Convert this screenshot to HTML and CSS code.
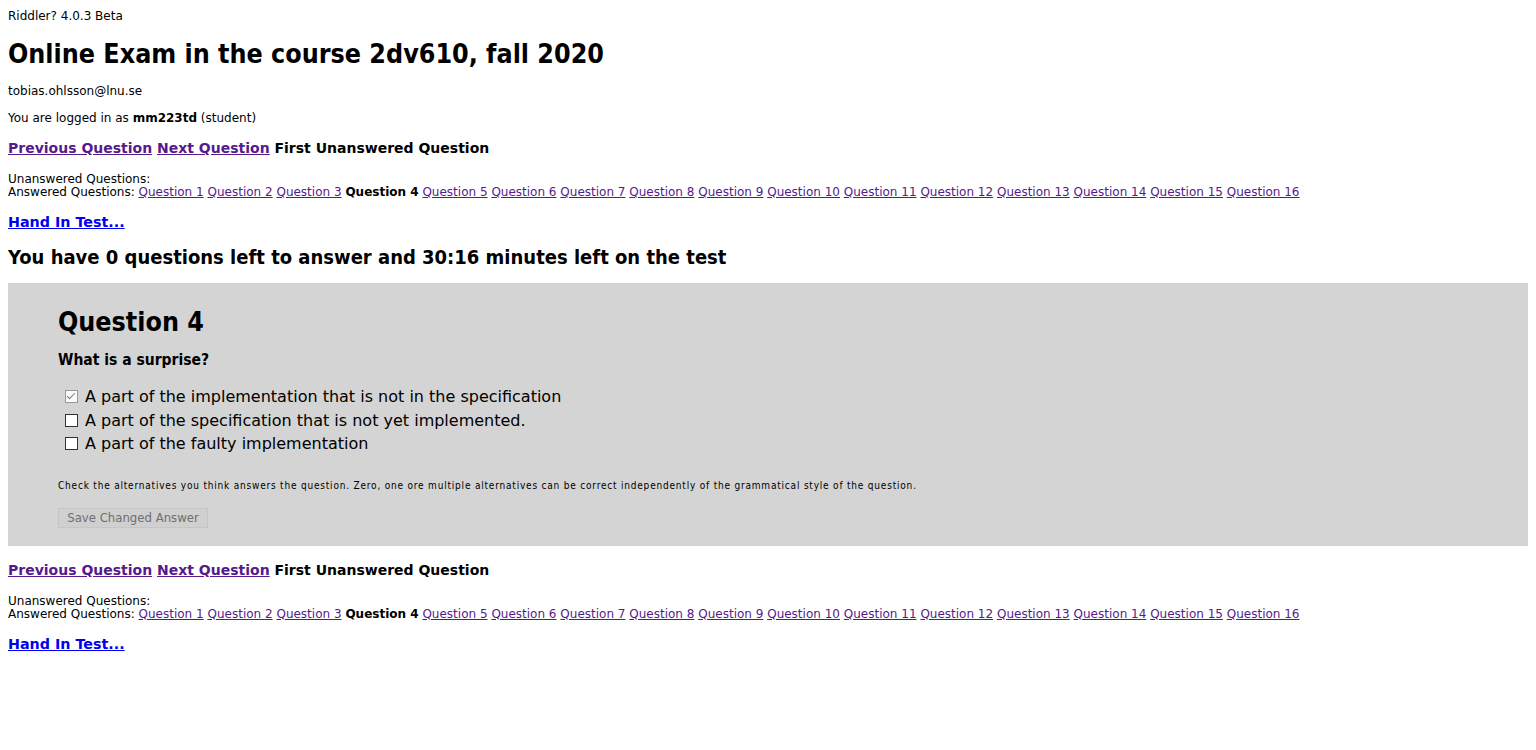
FILE: index.html
```html
<!DOCTYPE html>
<html lang="en">
<head>
<meta charset="utf-8">
<title>Riddler - Online Exam</title>
<link rel="stylesheet" href="styles.css">
</head>
<body>
<p class="version">Riddler? 4.0.3 Beta</p>
<h1 class="title">Online Exam in the course 2dv610, fall 2020</h1>
<p class="small email">tobias.ohlsson@lnu.se</p>
<p class="small logged">You are logged in as <b class="user">mm223td</b> (student)</p>

<div class="nav"><a href="#" class="visited">Previous Question</a> <a href="#" class="visited">Next Question</a> <span>First Unanswered Question</span></div>
<div class="qlist">
  <div>Unanswered Questions:</div>
  <div>Answered Questions: <a href="#">Question 1</a> <a href="#">Question 2</a> <a href="#">Question 3</a> <b>Question 4</b> <a href="#">Question 5</a> <a href="#">Question 6</a> <a href="#">Question 7</a> <a href="#">Question 8</a> <a href="#">Question 9</a> <a href="#">Question 10</a> <a href="#">Question 11</a> <a href="#">Question 12</a> <a href="#">Question 13</a> <a href="#">Question 14</a> <a href="#">Question 15</a> <a href="#">Question 16</a></div>
</div>
<div class="handin"><a href="#">Hand In Test...</a></div>

<h2 class="status">You have 0 questions left to answer and 30:16 minutes left on the test</h2>

<div class="question">
  <h2 class="qtitle">Question 4</h2>
  <p class="qtext">What is a surprise?</p>
  <div class="options">
    <label class="option"><input type="checkbox" checked disabled class="cb"> A part of the implementation that is not in the specification</label>
    <label class="option"><input type="checkbox" class="cb"> A part of the specification that is not yet implemented.</label>
    <label class="option"><input type="checkbox" class="cb"> A part of the faulty implementation</label>
  </div>
  <p class="hint">Check the alternatives you think answers the question. Zero, one ore multiple alternatives can be correct independently of the grammatical style of the question.</p>
  <button class="save" disabled>Save Changed Answer</button>
</div>

<div class="nav nav-bottom"><a href="#" class="visited">Previous Question</a> <a href="#" class="visited">Next Question</a> <span>First Unanswered Question</span></div>
<div class="qlist">
  <div>Unanswered Questions:</div>
  <div>Answered Questions: <a href="#">Question 1</a> <a href="#">Question 2</a> <a href="#">Question 3</a> <b>Question 4</b> <a href="#">Question 5</a> <a href="#">Question 6</a> <a href="#">Question 7</a> <a href="#">Question 8</a> <a href="#">Question 9</a> <a href="#">Question 10</a> <a href="#">Question 11</a> <a href="#">Question 12</a> <a href="#">Question 13</a> <a href="#">Question 14</a> <a href="#">Question 15</a> <a href="#">Question 16</a></div>
</div>
<div class="handin"><a href="#">Hand In Test...</a></div>
</body>
</html>
```

FILE: styles.css
```css
html, body {
  background: #ffffff;
}
body {
  margin: 8px;
  padding-top: 1px;
  color: #000;
  font-family: "DejaVu Sans", sans-serif;
}
.version {
  margin: 0;
  font-size: 12px;
  line-height: 15px;
}
.title {
  margin: 14px 0 0;
  font-family: "DejaVu Sans Condensed", "DejaVu Sans", sans-serif;
  font-size: 26.6px;
  line-height: 32px;
  font-weight: bold;
}
.small {
  font-size: 12px;
  line-height: 15px;
}
.email { margin: 14px 0 0; }
.logged { margin: 12px 0 0; }
.user {
  font-weight: bold;
}
.nav {
  margin-top: 13px;
  font-weight: bold;
  font-size: 14px;
  line-height: 18px;
}
.nav a { color: #551a8b; }
.qlist {
  margin-top: 16px;
  font-size: 12px;
  line-height: 13px;
}
.qlist a { color: #551a8b; }
.handin {
  margin-top: 14px;
  font-weight: bold;
  font-size: 14.3px;
  line-height: 18px;
}
.handin a { color: #0000ee; }
.status {
  margin: 14px 0 0;
  font-family: "DejaVu Sans Condensed", sans-serif;
  font-size: 20px;
  line-height: 24px;
}
.question {
  margin-top: 14px;
  background: #d4d4d4;
  padding: 23px 50px 18px;
}
.qtitle {
  margin: 0;
  font-family: "DejaVu Sans Condensed", sans-serif;
  font-size: 26.6px;
  line-height: 32px;
}
.qtext {
  margin: 13px 0 0;
  font-family: "DejaVu Sans Condensed", sans-serif;
  font-weight: bold;
  font-size: 15.5px;
  line-height: 18px;
}
.options {
  margin-top: 16px;
  display: flex;
  flex-direction: column;
}
.option {
  display: flex;
  align-items: center;
  gap: 7px;
  font-size: 16px;
  line-height: 23.5px;
  padding-left: 7px;
}
.cb {
  appearance: none;
  -webkit-appearance: none;
  margin: 0;
  width: 13px;
  height: 13px;
  border: 1px solid #333;
  background: #fff;
  flex: none;
  position: relative;
}
.cb:checked {
  border-color: #999;
  background: #fafafa;
}
.cb:checked::after {
  content: "";
  position: absolute;
  left: 3px;
  top: 0px;
  width: 3px;
  height: 7px;
  border: solid #777;
  border-width: 0 1.5px 1.5px 0;
  transform: rotate(45deg);
}
.hint {
  margin: 23px 0 0;
  font-family: "DejaVu Sans Condensed", sans-serif;
  font-size: 10px;
  line-height: 13px;
  letter-spacing: 0.8px;
}
.save {
  margin-top: 16px;
  width: 150px;
  height: 20px;
  padding: 0;
  font-family: "DejaVu Sans Condensed", sans-serif;
  font-size: 13px;
  color: #6f6f6f;
  background: #d0d0d0;
  border: 1px solid #c6c6c6;
  display: block;
}
.nav-bottom { margin-top: 15px; }
.nav-bottom + .qlist { margin-top: 16px; }
```
